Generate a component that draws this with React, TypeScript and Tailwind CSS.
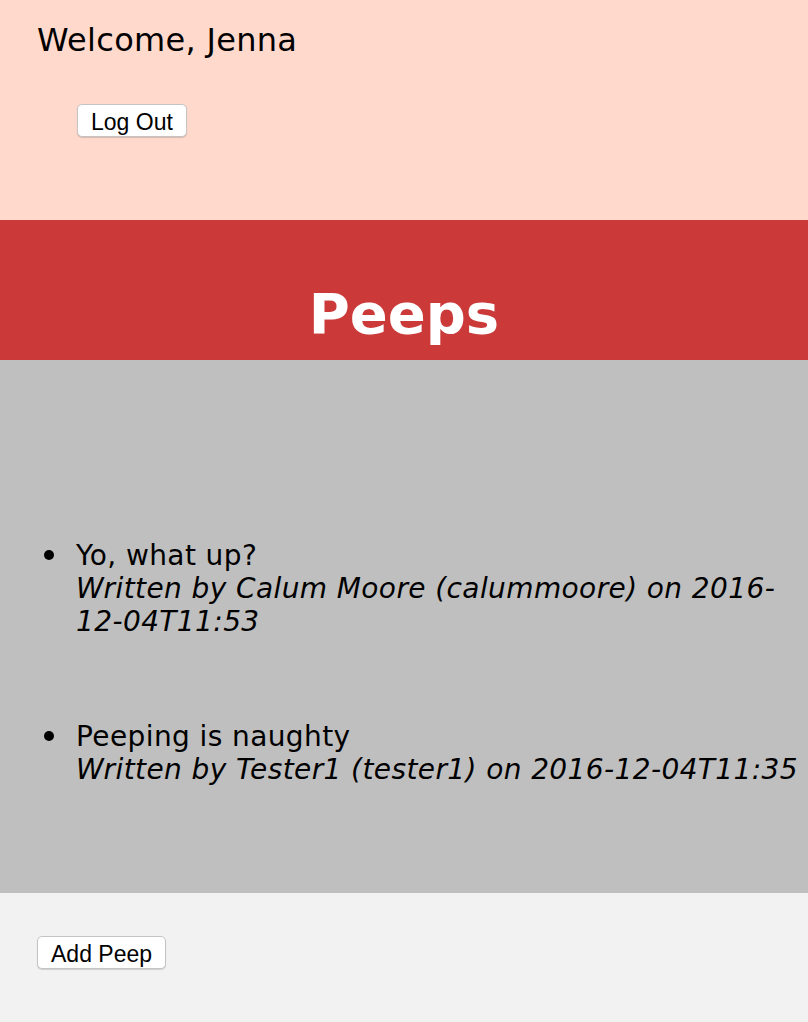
const peeps = [
  {
    body: 'Yo, what up?',
    name: 'Calum Moore',
    handle: 'calummoore',
    time: '2016-12-04T11:53',
  },
  {
    body: 'Peeping is naughty',
    name: 'Tester1',
    handle: 'tester1',
    time: '2016-12-04T11:35',
  },
];

const Button = ({ children }: { children: React.ReactNode }) => (
  <button className="h-[33px] px-[13px] pt-[3px] rounded-[5px] border border-[#c4c4c4] bg-white shadow-[0_1px_1px_rgba(0,0,0,0.15)] font-['Liberation_Sans',Arial,sans-serif] text-[23px] leading-none text-black">
    {children}
  </button>
);

export default function App() {
  return (
    <div className="w-[808px] font-['DejaVu_Sans',Verdana,sans-serif] text-black">
      <header className="h-[220px] bg-[#ffd9cc] pl-[37px] pt-[20px]">
        <p className="text-[32px] leading-[40px] tracking-[0.3px]">Welcome, Jenna</p>
        <div className="pl-[40px] pt-[44px]">
          <Button>Log Out</Button>
        </div>
      </header>
      <div className="h-[140px] bg-[#cc3939] flex justify-center">
        <h1 className="pt-[61px] text-[56px] leading-[66px] font-bold text-white">
          Peeps
        </h1>
      </div>
      <main className="h-[533px] bg-[#bfbfbf] pt-[179px]">
        <ul className="pl-[44px] pr-[8px] text-[28px] leading-[33px] tracking-[0.4px] flex flex-col gap-[82px]">
          {peeps.map((p) => (
            <li key={p.handle} className="flex">
              <span className="w-[32px] shrink-0 pt-[11px]">
                <span className="block w-[10px] h-[10px] rounded-full bg-black" />
              </span>
              <div>
                {p.body}
                <br />
                <em>
                  Written by {p.name} ({p.handle}) on {p.time}
                </em>
              </div>
            </li>
          ))}
        </ul>
      </main>
      <footer className="h-[129px] bg-[#f2f2f2] pl-[37px] pt-[43px]">
        <Button>Add Peep</Button>
      </footer>
    </div>
  );
}
